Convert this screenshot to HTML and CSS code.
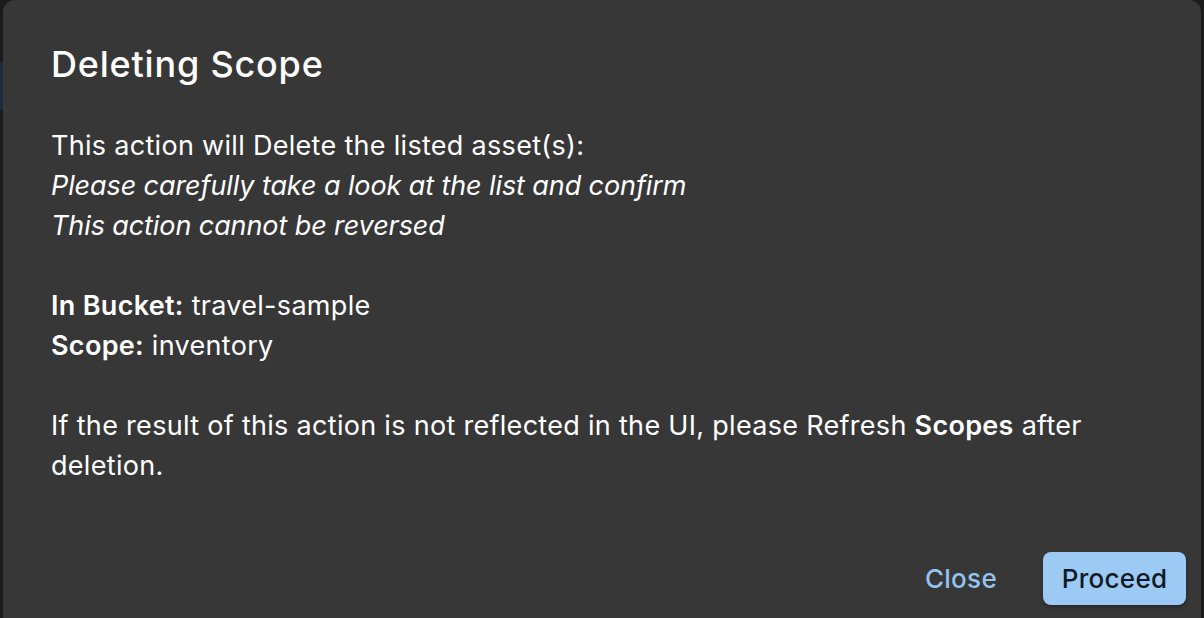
FILE: index.html
```html
<!DOCTYPE html>
<html>
<head>
<meta charset="utf-8">
<link rel="stylesheet" href="styles.css">
</head>
<body>
<div class="backdrop">
  <div class="side-strip"></div>
  <div class="dialog">
    <h1 class="title">Deleting Scope</h1>
    <div class="content">
      <p class="line">This action will Delete the listed asset(s):</p>
      <p class="line em">Please carefully take a look at the list and confirm</p>
      <p class="line em">This action cannot be reversed</p>
      <p class="line blank">&nbsp;</p>
      <p class="line"><b>In Bucket:</b> travel-sample</p>
      <p class="line"><b>Scope:</b> inventory</p>
      <p class="line blank">&nbsp;</p>
      <p class="line"><span>If the result of this action is not reflected in the UI, please Refresh </span><b>Scopes</b><span> after</span><br><span>deletion.</span></p>
    </div>
    <div class="actions">
      <button class="btn btn-text">Close</button>
      <button class="btn btn-primary">Proceed</button>
    </div>
  </div>
</div>
</body>
</html>
```
FILE: styles.css
```css
html, body {
  margin: 0;
  padding: 0;
  height: 100%;
  background: #1b1b1b;
  overflow: hidden;
}
.backdrop {
  position: relative;
  height: 618px;
  padding: 0 3px 0 3px;
  display: flex;
  font-family: "Inter", "Noto Sans", sans-serif;
  overflow: hidden;
}
.side-strip {
  position: absolute;
  left: 0;
  top: 62px;
  width: 3px;
  height: 48px;
  background: #1d2b3d;
}
.dialog {
  flex: 1;
  background: #373737;
  border-radius: 12px 12px 0 0;
  height: 618px;
  padding: 0 48px;
  box-sizing: border-box;
  color: #ffffff;
  display: flex;
  flex-direction: column;
}
.title {
  margin: 40px 0 0 0;
  font-size: 36px;
  font-weight: 500;
  line-height: 48px;
  letter-spacing: 0.8px;
}
.content {
  margin-top: 38px;
  font-size: 27px;
  line-height: 40px;
  letter-spacing: 0.3px;
  font-weight: 400;
}
.line {
  margin: 0;
}
.em {
  font-style: italic;
  letter-spacing: -0.1px;
}
.line b {
  font-weight: 600;
}
.actions {
  margin-top: 66px;
  display: flex;
  justify-content: flex-end;
  align-items: center;
  gap: 34px;
  margin-right: -33px;
}
.btn {
  font-family: inherit;
  font-size: 26px;
  border: none;
  cursor: pointer;
  line-height: 32px;
  letter-spacing: 0.3px;
}
.btn-text {
  background: transparent;
  color: #94c3ef;
  font-weight: 500;
  padding: 10px 12px;
}
.btn-primary {
  background: #9ccaf5;
  color: #111a24;
  font-weight: 500;
  border-radius: 8px;
  padding: 10px 0;
  height: 53px;
  width: 143px;
  box-shadow: 0 2px 4px rgba(0,0,0,0.3);
}
```
